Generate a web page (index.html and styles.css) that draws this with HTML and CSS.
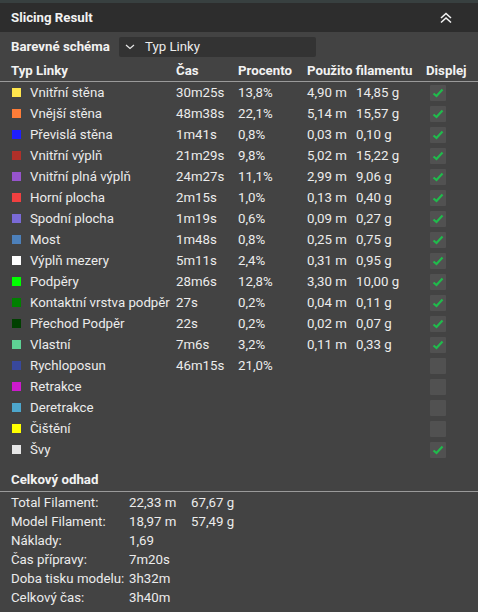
FILE: index.html
```html
<!DOCTYPE html>
<html lang="cs">
<head>
<meta charset="utf-8">
<title>Slicing Result</title>
<link rel="stylesheet" href="styles.css">
</head>
<body>
<div class="panel">
  <div class="titlebar">
    <span class="title">Slicing Result</span>
    <svg class="collapse" width="14" height="12" viewBox="0 0 14 12">
      <polyline points="2,6 7,1.5 12,6" fill="none" stroke="#f2f2f2" stroke-width="1.6"/>
      <polyline points="2,10.5 7,6 12,10.5" fill="none" stroke="#f2f2f2" stroke-width="1.6"/>
    </svg>
  </div>

  <div class="scheme">
    <span class="scheme-label">Barevné schéma</span>
    <div class="select">
      <svg class="select-arrow" width="10" height="6" viewBox="0 0 10 6">
        <polyline points="1,1 5,4.5 9,1" fill="none" stroke="#e8e8e8" stroke-width="1.2"/>
      </svg>
      <span>Typ Linky</span>
    </div>
  </div>

  <div class="table">
    <div class="row head">
      <span class="c-name">Typ Linky</span>
      <span>Čas</span>
      <span>Procento</span>
      <span class="c-used">Použito filamentu</span>
      <span>Displej</span>
    </div>
    <div class="rule"></div>

    <div class="row"><span class="c-name"><i class="sw" style="background:#ffe64d"></i>Vnitřní stěna</span><span>30m25s</span><span>13,8%</span><span>4,90 m</span><span>14,85 g</span><span class="cb on"></span></div>
    <div class="row"><span class="c-name"><i class="sw" style="background:#ff7d38"></i>Vnější stěna</span><span>48m38s</span><span>22,1%</span><span>5,14 m</span><span>15,57 g</span><span class="cb on"></span></div>
    <div class="row"><span class="c-name"><i class="sw" style="background:#1f1fff"></i>Převislá stěna</span><span>1m41s</span><span>0,8%</span><span>0,03 m</span><span>0,10 g</span><span class="cb on"></span></div>
    <div class="row"><span class="c-name"><i class="sw" style="background:#b03029"></i>Vnitřní výplň</span><span>21m29s</span><span>9,8%</span><span>5,02 m</span><span>15,22 g</span><span class="cb on"></span></div>
    <div class="row"><span class="c-name"><i class="sw" style="background:#9654cc"></i>Vnitřní plná výplň</span><span>24m27s</span><span>11,1%</span><span>2,99 m</span><span>9,06 g</span><span class="cb on"></span></div>
    <div class="row"><span class="c-name"><i class="sw" style="background:#f04040"></i>Horní plocha</span><span>2m15s</span><span>1,0%</span><span>0,13 m</span><span>0,40 g</span><span class="cb on"></span></div>
    <div class="row"><span class="c-name"><i class="sw" style="background:#7a6ad6"></i>Spodní plocha</span><span>1m19s</span><span>0,6%</span><span>0,09 m</span><span>0,27 g</span><span class="cb on"></span></div>
    <div class="row"><span class="c-name"><i class="sw" style="background:#4d80ba"></i>Most</span><span>1m48s</span><span>0,8%</span><span>0,25 m</span><span>0,75 g</span><span class="cb on"></span></div>
    <div class="row"><span class="c-name"><i class="sw" style="background:#ffffff"></i>Výplň mezery</span><span>5m11s</span><span>2,4%</span><span>0,31 m</span><span>0,95 g</span><span class="cb on"></span></div>
    <div class="row"><span class="c-name"><i class="sw" style="background:#00ff00"></i>Podpěry</span><span>28m6s</span><span>12,8%</span><span>3,30 m</span><span>10,00 g</span><span class="cb on"></span></div>
    <div class="row"><span class="c-name"><i class="sw" style="background:#008000"></i>Kontaktní vrstva podpěr</span><span>27s</span><span>0,2%</span><span>0,04 m</span><span>0,11 g</span><span class="cb on"></span></div>
    <div class="row"><span class="c-name"><i class="sw" style="background:#004000"></i>Přechod Podpěr</span><span>22s</span><span>0,2%</span><span>0,02 m</span><span>0,07 g</span><span class="cb on"></span></div>
    <div class="row"><span class="c-name"><i class="sw" style="background:#5ed194"></i>Vlastní</span><span>7m6s</span><span>3,2%</span><span>0,11 m</span><span>0,33 g</span><span class="cb on"></span></div>
    <div class="row"><span class="c-name"><i class="sw" style="background:#38489c"></i>Rychloposun</span><span>46m15s</span><span>21,0%</span><span></span><span></span><span class="cb"></span></div>
    <div class="row"><span class="c-name"><i class="sw" style="background:#cc1acc"></i>Retrakce</span><span></span><span></span><span></span><span></span><span class="cb"></span></div>
    <div class="row"><span class="c-name"><i class="sw" style="background:#4da6cc"></i>Deretrakce</span><span></span><span></span><span></span><span></span><span class="cb"></span></div>
    <div class="row"><span class="c-name"><i class="sw" style="background:#ffff00"></i>Čištění</span><span></span><span></span><span></span><span></span><span class="cb"></span></div>
    <div class="row"><span class="c-name"><i class="sw" style="background:#e6e6e6"></i>Švy</span><span></span><span></span><span></span><span></span><span class="cb on"></span></div>
  </div>

  <div class="summary-title">Celkový odhad</div>
  <div class="rule"></div>
  <div class="summary">
    <span>Total Filament:</span><span>22,33 m</span><span>67,67 g</span>
    <span>Model Filament:</span><span>18,97 m</span><span>57,49 g</span>
    <span>Náklady:</span><span>1,69</span><span></span>
    <span>Čas přípravy:</span><span>7m20s</span><span></span>
    <span>Doba tisku modelu:</span><span>3h32m</span><span></span>
    <span>Celkový čas:</span><span>3h40m</span><span></span>
  </div>
</div>
</body>
</html>
```

FILE: styles.css
```css
* { box-sizing: border-box; }

html, body {
  margin: 0;
  padding: 0;
  background: #434343;
}

body {
  width: 478px;
  height: 612px;
  overflow: hidden;
  font-family: Roboto, "Noto Sans", "Liberation Sans", sans-serif;
  font-size: 13.25px;
  color: #ececec;
}

.panel {
  display: flex;
  flex-direction: column;
}

.titlebar {
  height: 32px;
  border-top: 3px solid #384040;
  background: #2d2d2d;
  display: flex;
  align-items: center;
  justify-content: space-between;
  padding: 0 25px 0 11px;
}

.title {
  font-weight: 700;
  color: #f2f2f2;
}

.collapse { display: block; }

.scheme {
  height: 27px;
  padding-top: 2px;
  display: flex;
  align-items: center;
  padding-left: 11px;
}

.scheme-label {
  width: 108px;
  font-weight: 700;
  color: #f2f2f2;
}

.select {
  width: 197px;
  height: 20px;
  background: #333333;
  border-radius: 2px;
  display: flex;
  align-items: center;
  gap: 10px;
  padding-left: 6px;
}

.select-arrow { display: block; }

.table {
  display: flex;
  flex-direction: column;
}

.row {
  display: grid;
  grid-template-columns: 165px 62px 69px 49px 70px 1fr;
  align-items: center;
  height: 21px;
  padding-left: 11px;
  white-space: nowrap;
}

.row.head {
  height: 22px;
  font-weight: 700;
  color: #f2f2f2;
}

.row.head .c-used { grid-column: span 2; }

.c-name {
  display: flex;
  align-items: center;
}

.sw {
  width: 9px;
  height: 9px;
  margin: 0 9px 0 1px;
  flex: none;
}

.rule {
  height: 1px;
  background: #9a9a9a;
}

.cb {
  width: 16px;
  height: 16px;
  background: #515151;
  border-radius: 1px;
  margin-left: 4px;
}

.cb.on {
  background: #515151 url("data:image/svg+xml,%3Csvg xmlns='http://www.w3.org/2000/svg' width='16' height='16'%3E%3Cpolyline points='3.5,8.5 6.5,11 12.5,4.5' fill='none' stroke='%2320bb4c' stroke-width='2.2'/%3E%3C/svg%3E") no-repeat center;
}

.summary-title {
  height: 31px;
  padding: 8px 0 0 11px;
  display: flex;
  align-items: center;
  font-weight: 700;
  color: #f2f2f2;
}

.summary {
  display: grid;
  grid-template-columns: 118px 62px 1fr;
  grid-auto-rows: 19px;
  align-items: center;
  padding: 1px 0 0 11px;
  white-space: nowrap;
}
```
